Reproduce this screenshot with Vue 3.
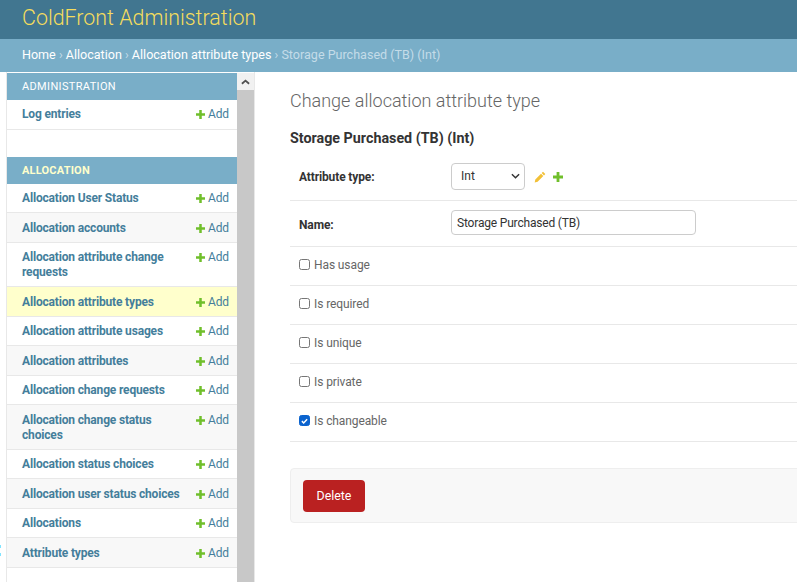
<template>
  <div class="page">
    <header class="top">ColdFront Administration</header>
    <div class="crumbs">
      <a>Home</a> › <a>Allocation</a> › <a>Allocation attribute types</a> › <span class="here">Storage Purchased (TB) (Int)</span>
    </div>
    <div class="body-wrap">
      <div class="nav-toggle" />
      <nav class="side">
        <div class="side-list">
          <section v-for="group in groups" :key="group.title" class="group">
            <div class="caption" :class="{ active: group.active }">{{ group.title }}</div>
            <div
              v-for="row in group.rows"
              :key="row"
              class="row"
              :class="{ current: row === 'Allocation attribute types' }"
            >
              <a class="model">{{ row }}</a>
              <a class="add">
                <svg class="plus" viewBox="0 0 10 10" width="9" height="9"><path d="M3.600 0h2.800v3.600H10v2.800H6.400V10H3.600V6.400H0V3.600h3.600z" fill="#70bf2b" /></svg>
                Add
              </a>
            </div>
          </section>
        </div>
        <div class="scroll">
          <div class="scroll-up">
            <svg viewBox="0 0 10 6" width="9" height="6"><path d="M1 5l4-3.500L9 5" fill="none" stroke="#505050" stroke-width="2" /></svg>
          </div>
          <div class="scroll-thumb" />
        </div>
      </nav>
      <main class="main">
        <h1>Change allocation attribute type</h1>
        <h2>Storage Purchased (TB) (Int)</h2>
        <div class="form-row first">
          <label class="req">Attribute type:</label>
          <div class="select">
            <span>Int</span>
            <svg viewBox="0 0 10 6" width="9" height="6"><path d="M1 1l4 4 4-4" fill="none" stroke="#333" stroke-width="1.600" /></svg>
          </div>
          <svg class="pencil" viewBox="0 0 12 12" width="12" height="12">
            <path d="M9 .8l2.300 2.300-1.300 1.300-2.300-2.300zM7 2.800l2.300 2.300-5.700 5.700-2.900.6.600-2.900z" fill="#f2c037" />
          </svg>
          <svg class="plus-big" viewBox="0 0 10 10" width="10" height="10"><path d="M3.600 0h2.800v3.600H10v2.800H6.400V10H3.600V6.400H0V3.600h3.600z" fill="#70bf2b" /></svg>
        </div>
        <div class="form-row name">
          <label class="req">Name:</label>
          <div class="text-input">Storage Purchased (TB)</div>
        </div>
        <div v-for="box in boxes" :key="box.label" class="form-row check">
          <span class="box" :class="{ on: box.on }">
            <svg v-if="box.on" viewBox="0 0 12 12" width="10" height="10"><path d="M2.500 6.200l2.400 2.400 4.600-5" fill="none" stroke="#fff" stroke-width="2" /></svg>
          </span>
          <span class="box-label">{{ box.label }}</span>
        </div>
        <div class="submit">
          <a class="delete">Delete</a>
        </div>
      </main>
    </div>
  </div>
</template>

<script setup>
const groups = [
  { title: 'Administration', rows: ['Log entries'] },
  {
    title: 'Allocation',
    active: true,
    rows: [
      'Allocation User Status',
      'Allocation accounts',
      'Allocation attribute change requests',
      'Allocation attribute types',
      'Allocation attribute usages',
      'Allocation attributes',
      'Allocation change requests',
      'Allocation change status choices',
      'Allocation status choices',
      'Allocation user status choices',
      'Allocations',
      'Attribute types',
    ],
  },
]

const boxes = [
  { label: 'Has usage' },
  { label: 'Is required' },
  { label: 'Is unique' },
  { label: 'Is private' },
  { label: 'Is changeable', on: true },
]
</script>

<style>
html, body { margin: 0; height: 100%; overflow: hidden; background: #fff; }
</style>

<style scoped>
.page {
  height: 582px;
  overflow: hidden;
  display: flex;
  flex-direction: column;
  font-family: Roboto, "Liberation Sans", sans-serif;
  font-size: 12px;
  color: #333;
}

.top {
  height: 39px;
  flex: none;
  box-sizing: border-box;
  padding: 3px 22px 0;
  background: #417690;
  color: #f5dd5d;
  font-size: 21.4px;
  font-weight: 300;
  line-height: 30px;
}

.crumbs {
  height: 33px;
  flex: none;
  box-sizing: border-box;
  padding: 0 22px;
  background: #79aec8;
  color: #c4dce8;
  font-size: 12.55px;
  line-height: 32px;
}
.crumbs a { color: #fff; }
.crumbs .here { color: #c4dce8; }

.body-wrap {
  position: relative;
  flex: 1;
  display: flex;
  min-height: 0;
}

.nav-toggle {
  position: absolute;
  left: 0;
  top: 473px;
  width: 1px;
  height: 11px;
  background: linear-gradient(#80e4ff 0 3px, transparent 3px 8px, #80e4ff 8px);
}

.side {
  width: 249px;
  flex: none;
  margin-left: 6px;
  box-sizing: border-box;
  padding-top: 1px;
  display: flex;
  border-left: 1px solid #e8e8e8;
  border-right: 1px solid #e8e8e8;
  overflow: hidden;
}

.side-list { width: 230px; flex: none; }

.group { margin-bottom: 27px; }
.group:first-child .row { padding-top: 6.5px; padding-bottom: 7px; }

.caption {
  height: 27px;
  padding: 0 15px;
  background: #79aec8;
  color: #fff;
  font-size: 11px;
  font-weight: 400;
  line-height: 27px;
  letter-spacing: 0.35px;
  text-transform: uppercase;
}
.caption.active { color: #ffc; font-weight: 700; letter-spacing: 0.2px; }

.row {
  display: flex;
  align-items: flex-start;
  justify-content: space-between;
  padding: 7.5px 8px 6px 15px;
  border-bottom: 1px solid #e8e8e8;
  line-height: 15px;
}
.row:nth-child(odd) { background: #f8f8f8; }
.row.current { background: #ffffcc; }

.model { width: 165px; color: #447e9b; font-weight: 700; letter-spacing: -0.17px; }

.add {
  display: flex;
  align-items: center;
  gap: 3px;
  color: #447e9b;
  letter-spacing: -0.15px;
  white-space: nowrap;
}

.plus { flex: none; }

.scroll {
  width: 17px;
  flex: none;
  display: flex;
  flex-direction: column;
  background: #c8c8c8;
}
.scroll-up {
  height: 17px;
  display: flex;
  align-items: center;
  justify-content: center;
  background: #f1f1f1;
}
.scroll-thumb { flex: 1; }

.main {
  flex: none;
  width: 542px;
  box-sizing: border-box;
  padding: 19px 0 0 35px;
}

h1 {
  margin: 0;
  font-size: 18px;
  font-weight: 300;
  line-height: 19px;
  color: #666;
}

h2 {
  margin: 20px 0 0;
  font-size: 14.3px;
  font-weight: 700;
  line-height: 17px;
  color: #333;
}

.form-row {
  display: flex;
  align-items: center;
  box-sizing: border-box;
  border-bottom: 1px solid #e8e8e8;
  padding-left: 9px;
}
.form-row.first { height: 54px; padding-top: 6px; }
.form-row.name { height: 46px; }
.form-row.check { height: 39px; padding-bottom: 2px; }

.req {
  width: 152px;
  flex: none;
  color: #333;
  font-weight: 700;
  letter-spacing: -0.13px;
}
.name .req { margin-top: 2px; }

.select {
  width: 74px;
  height: 27px;
  box-sizing: border-box;
  display: flex;
  align-items: center;
  justify-content: space-between;
  padding: 0 4px 2px 9px;
  border: 1px solid #ccc;
  border-radius: 4px;
  color: #333;
}

.pencil { margin-left: 9px; }
.plus-big { margin-left: 7px; }

.text-input {
  width: 245px;
  height: 25px;
  box-sizing: border-box;
  margin-bottom: 2px;
  padding: 0 5px;
  border: 1px solid #ccc;
  border-radius: 4px;
  letter-spacing: -0.18px;
  line-height: 24px;
  color: #333;
}

.box {
  width: 11px;
  height: 11px;
  box-sizing: border-box;
  margin-top: -1px;
  display: flex;
  align-items: center;
  justify-content: center;
  border: 1px solid #767676;
  border-radius: 2.5px;
  background: #fff;
}
.box.on { border-color: #0b63ce; background: #0b63ce; }

.box-label { margin-left: 4px; letter-spacing: -0.1px; color: #666; }

.submit {
  margin-top: 26px;
  height: 55px;
  box-sizing: border-box;
  padding: 11px 12px;
  border: 1px solid #eee;
  border-radius: 4px;
  background: #f8f8f8;
  width: 700px;
}

.delete {
  display: inline-block;
  width: 62px;
  height: 32px;
  background: #ba2121;
  border-radius: 4px;
  color: #fff;
  font-size: 12.4px;
  text-align: center;
  line-height: 32px;
}
</style>
